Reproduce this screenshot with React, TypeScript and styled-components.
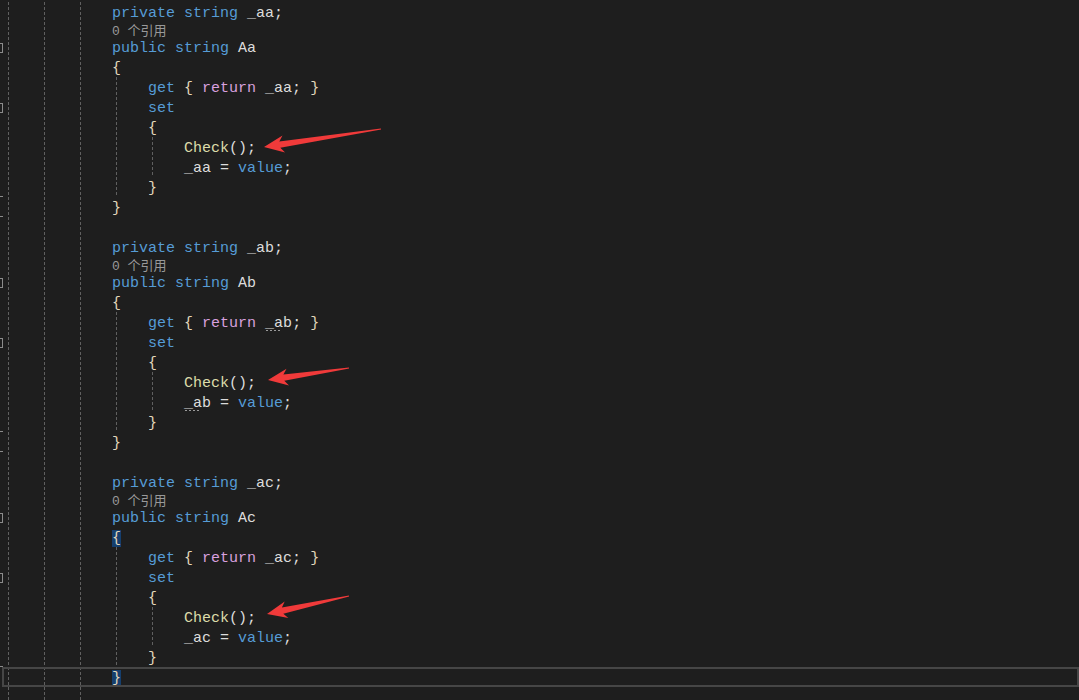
import React from 'react';
import styled, { createGlobalStyle } from 'styled-components';

const GlobalStyle = createGlobalStyle`
  html, body {
    margin: 0;
    padding: 0;
    background: #1e1e1e;
    overflow: hidden;
  }
`;

type TokKind = 'kw' | 'ctl' | 'fn' | 'txt' | 'brace';

type Tok = {
  t: string;
  k?: TokKind;
  match?: boolean;
  dots?: boolean;
};

type LineData = {
  kind: 'code' | 'lens' | 'blank';
  indent: number;
  toks?: Tok[];
  marker?: 'box' | 'end';
  current?: boolean;
};

const colors: Record<TokKind, string> = {
  kw: '#569cd6',
  ctl: '#d8a0df',
  fn: '#dcdcaa',
  txt: '#dcdcdc',
  brace: '#e2d8bc',
};

const Editor = styled.div`
  position: relative;
  width: 1079px;
  height: 700px;
  padding-top: 2px;
  box-sizing: border-box;
  background: #1e1e1e;
  overflow: hidden;
  font-family: 'Liberation Mono', 'DejaVu Sans Mono', monospace;
  font-size: 15px;
`;

const Line = styled.div<{ $h: number; $current?: boolean }>`
  position: relative;
  display: flex;
  align-items: stretch;
  height: ${({ $h }) => $h}px;
  line-height: ${({ $h }) => $h}px;
  white-space: pre;

  &::after {
    content: '';
    display: ${({ $current }) => ($current ? 'block' : 'none')};
    position: absolute;
    inset: 0 0 0 2px;
    border: 2px solid #464646;
    pointer-events: none;
  }
`;

const Margin = styled.div`
  position: relative;
  width: 4px;
  flex: none;
`;

const OutlineBox = styled.span`
  position: absolute;
  left: 0;
  top: 6px;
  width: 2px;
  height: 8px;
  border: 1px solid #8c8c8c;
  border-left: none;
`;

const OutlineEnd = styled.span`
  position: absolute;
  left: 0;
  bottom: 0;
  width: 3px;
  height: 1px;
  background: #8c8c8c;
`;

const Indent = styled.span`
  flex: none;
  width: 36px;
  background-image: linear-gradient(to bottom, #606060 60%, transparent 60%);
  background-size: 1px 5px;
  background-position: 4px 0;
  background-repeat: repeat-y;
`;

const Code = styled.span`
  display: inline-block;
  position: relative;
  top: 2px;
`;

const Tk = styled.span<{ $k: TokKind; $match?: boolean }>`
  color: ${({ $k }) => colors[$k]};
  background: ${({ $match }) => ($match ? '#153f6e' : 'transparent')};
`;

const Dotted = styled.span`
  position: relative;

  &::after {
    content: '';
    position: absolute;
    left: 1px;
    right: 3px;
    bottom: 1px;
    height: 1px;
    background-image: repeating-linear-gradient(to right, #9a9a9a 0 2px, transparent 2px 4px);
  }
`;

const Lens = styled.span`
  position: relative;
  top: 2px;
  font-family: 'Liberation Mono', 'Noto Sans CJK SC', monospace;
  font-size: 13px;
  color: #999999;
`;

const Overlay = styled.svg`
  position: absolute;
  left: 0;
  top: 0;
  pointer-events: none;
`;

function propertyBlock(suffix: string, last: boolean): LineData[] {
  const field = `_a${suffix}`;
  const name = `A${suffix}`;
  const dots = suffix === 'b';
  const fieldToks = (f: string): Tok[] =>
    dots ? [{ t: '_a', k: 'txt', dots: true }, { t: f.slice(2), k: 'txt' }] : [{ t: f, k: 'txt' }];

  const lines: LineData[] = [
    { kind: 'code', indent: 3, toks: [{ t: 'private', k: 'kw' }, { t: ' ' }, { t: 'string', k: 'kw' }, { t: ` ${field};`, k: 'txt' }] },
    { kind: 'lens', indent: 3 },
    { kind: 'code', indent: 3, marker: 'box', toks: [{ t: 'public', k: 'kw' }, { t: ' ' }, { t: 'string', k: 'kw' }, { t: ` ${name}`, k: 'txt' }] },
    { kind: 'code', indent: 3, toks: [{ t: '{', k: 'brace', match: last }] },
    {
      kind: 'code',
      indent: 4,
      toks: [
        { t: 'get', k: 'kw' },
        { t: ' ' },
        { t: '{', k: 'brace' },
        { t: ' ' },
        { t: 'return', k: 'ctl' },
        { t: ' ' },
        ...fieldToks(field),
        { t: '; ', k: 'txt' },
        { t: '}', k: 'brace' },
      ],
    },
    { kind: 'code', indent: 4, marker: 'box', toks: [{ t: 'set', k: 'kw' }] },
    { kind: 'code', indent: 4, toks: [{ t: '{', k: 'brace' }] },
    { kind: 'code', indent: 5, toks: [{ t: 'Check', k: 'fn' }, { t: '();', k: 'txt' }] },
    { kind: 'code', indent: 5, toks: [...fieldToks(field), { t: ' = ', k: 'txt' }, { t: 'value', k: 'kw' }, { t: ';', k: 'txt' }] },
    { kind: 'code', indent: 4, marker: 'end', toks: [{ t: '}', k: 'brace' }] },
    { kind: 'code', indent: 3, marker: last ? undefined : 'end', current: last, toks: [{ t: '}', k: 'brace', match: last }] },
  ];
  lines.push({ kind: 'blank', indent: 3 });
  return lines;
}

const lines: LineData[] = [...propertyBlock('a', false), ...propertyBlock('b', false), ...propertyBlock('c', true)];

type Arrow = { tail: [number, number]; tip: [number, number] };

const arrows: Arrow[] = [
  { tail: [381, 129], tip: [264, 147] },
  { tail: [349, 368], tip: [268, 380] },
  { tail: [349, 596], tip: [267, 614] },
];

function arrowPoints({ tail, tip }: Arrow): string {
  const dx = tail[0] - tip[0];
  const dy = tail[1] - tip[1];
  const len = Math.hypot(dx, dy);
  const ux = dx / len;
  const uy = dy / len;
  const nx = -uy;
  const ny = ux;
  const at = (d: number, w: number) => `${(tip[0] + ux * d + nx * w).toFixed(1)},${(tip[1] + uy * d + ny * w).toFixed(1)}`;
  return [
    at(0, 0),
    at(20, 8.5),
    at(16, 3.2),
    `${(tail[0] + nx * 0.6).toFixed(1)},${(tail[1] + ny * 0.6).toFixed(1)}`,
    `${(tail[0] - nx * 0.6).toFixed(1)},${(tail[1] - ny * 0.6).toFixed(1)}`,
    at(16, -3.2),
    at(20, -8.5),
  ].join(' ');
}

const renderTok = (tok: Tok, i: number) => {
  const node = (
    <Tk key={i} $k={tok.k ?? 'txt'} $match={tok.match}>
      {tok.t}
    </Tk>
  );
  return tok.dots ? <Dotted key={i}>{node}</Dotted> : node;
};

const App = () => {
  return (
    <>
      <GlobalStyle />
      <Editor>
        {lines.map((line, i) => (
          <Line key={i} $h={line.kind === 'lens' ? 15 : 20} $current={line.current}>
            <Margin>
              {line.marker === 'box' && <OutlineBox />}
              {line.marker === 'end' && <OutlineEnd />}
            </Margin>
            {Array.from({ length: line.indent }).map((_, j) => (
              <Indent key={j} />
            ))}
            {line.kind === 'code' && <Code>{line.toks?.map(renderTok)}</Code>}
            {line.kind === 'lens' && <Lens>0 个引用</Lens>}
          </Line>
        ))}
        <Line $h={20}>
          <Margin />
          <Indent />
          <Indent />
          <Indent />
        </Line>
        <Overlay width={1079} height={700}>
          {arrows.map((a, i) => (
            <polygon key={i} points={arrowPoints(a)} fill="#f03a3a" />
          ))}
        </Overlay>
      </Editor>
    </>
  );
};

export default App;
